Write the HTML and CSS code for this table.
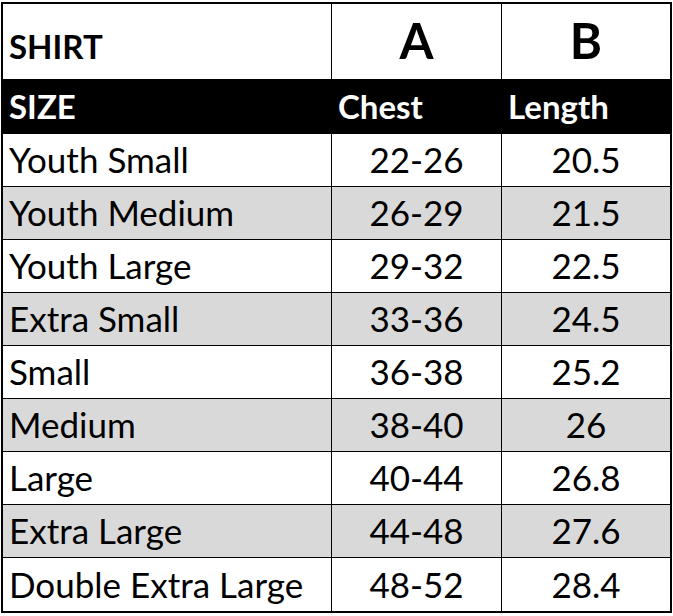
FILE: index.html
```html
<!DOCTYPE html>
<html>
<head>
<meta charset="utf-8">
<link rel="stylesheet" href="styles.css">
</head>
<body>
<div class="sheet">
  <div class="row head">
    <div class="cell c1 label">SHIRT</div>
    <div class="cell c2 big">A</div>
    <div class="cell c3 big">B</div>
  </div>
  <div class="row sub">
    <div class="cell c1">SIZE</div>
    <div class="cell c2">Chest</div>
    <div class="cell c3">Length</div>
  </div>
  <div class="row body first"><div class="cell c1">Youth Small</div><div class="cell c2 num">22-26</div><div class="cell c3 num">20.5</div></div>
  <div class="row body alt"><div class="cell c1">Youth Medium</div><div class="cell c2 num">26-29</div><div class="cell c3 num">21.5</div></div>
  <div class="row body"><div class="cell c1">Youth Large</div><div class="cell c2 num">29-32</div><div class="cell c3 num">22.5</div></div>
  <div class="row body alt"><div class="cell c1">Extra Small</div><div class="cell c2 num">33-36</div><div class="cell c3 num">24.5</div></div>
  <div class="row body"><div class="cell c1">Small</div><div class="cell c2 num">36-38</div><div class="cell c3 num">25.2</div></div>
  <div class="row body alt"><div class="cell c1">Medium</div><div class="cell c2 num">38-40</div><div class="cell c3 num">26</div></div>
  <div class="row body"><div class="cell c1">Large</div><div class="cell c2 num">40-44</div><div class="cell c3 num">26.8</div></div>
  <div class="row body alt"><div class="cell c1">Extra Large</div><div class="cell c2 num">44-48</div><div class="cell c3 num">27.6</div></div>
  <div class="row body last"><div class="cell c1">Double Extra Large</div><div class="cell c2 num">48-52</div><div class="cell c3 num">28.4</div></div>
</div>
</body>
</html>
```

FILE: styles.css
```css
html, body {
  margin: 0;
  padding: 0;
  background: #ffffff;
}
body {
  padding: 2px 0 0 1px;
  font-family: Lato, "Liberation Sans", sans-serif;
  color: #000;
}
.sheet {
  width: 667px;
  border: 2px solid #000;
  display: flex;
  flex-direction: column;
}
.row {
  box-sizing: border-box;
  display: grid;
  grid-template-columns: 329px 170px 168px;
}
.cell {
  box-sizing: border-box;
  display: flex;
  align-items: flex-end;
  padding-left: 6px;
  font-size: 35px;
  line-height: 1.2;
  white-space: nowrap;
}
.c1, .c2 {
  border-right: 1px solid #000;
}
.head {
  height: 75px;
}
.head .cell {
  font-weight: 700;
  font-size: 33px;
  padding-bottom: 12px;
}
.head .big {
  justify-content: center;
  padding-left: 0;
  font-size: 49px;
  padding-bottom: 9px;
}
.sub {
  height: 55px;
  background: #000;
}
.sub .cell {
  color: #fff;
  font-weight: 700;
  font-size: 33px;
  padding-bottom: 7px;
}
.body {
  height: 53px;
  border-top: 1px solid #000;
}
.body.first {
  height: 52px;
  border-top: none;
}
.body.last {
  height: 54px;
}
.body .cell {
  padding-bottom: 6px;
}
.body .num {
  justify-content: center;
  padding-left: 0;
}
.alt {
  background: #d9d9d9;
}
```
